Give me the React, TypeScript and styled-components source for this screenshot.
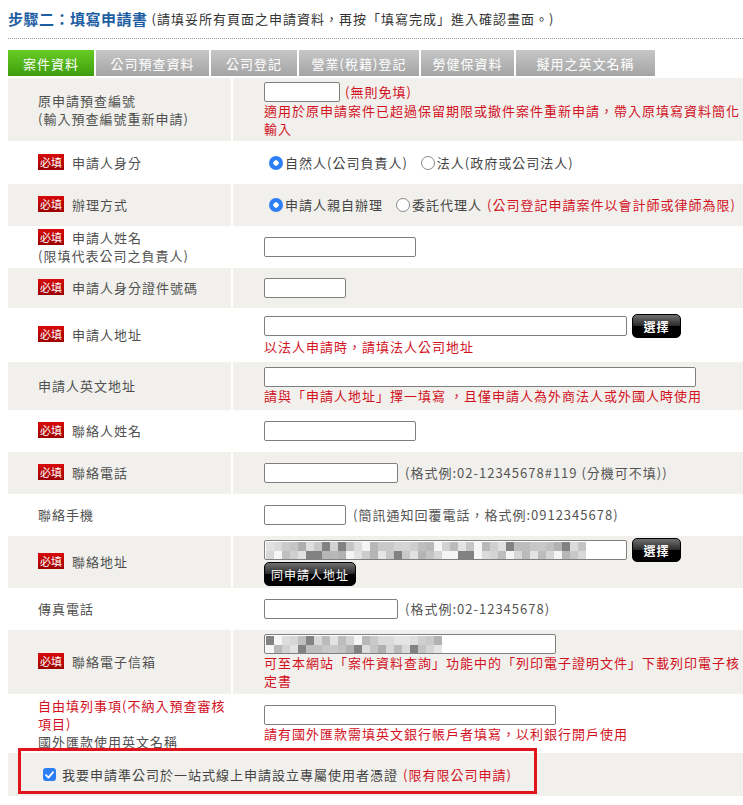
import styled, { createGlobalStyle } from "styled-components";

const GlobalStyle = createGlobalStyle`
  html, body {
    overflow: hidden;
  }
  body {
    margin: 8px 0 0 8px;
    background: #fff;
    font-family: "Noto Sans CJK TC", "Noto Sans", sans-serif;
    font-size: 13px;
    color: #333;
  }
`;

const Page = styled.div`
  width: 100%;
`;

const Heading = styled.div`
  height: 20px;
  display: flex;
  align-items: center;
  padding-bottom: 10px;
  border-bottom: 1px dotted #9a9a9a;
  white-space: nowrap;
`;

const StepTitle = styled.span`
  color: #1d5ea3;
  font-size: 15px;
  font-weight: bold;
  letter-spacing: 0.5px;
`;

const StepNote = styled.span`
  margin-left: 4px;
  font-size: 13px;
  letter-spacing: 1px;
  color: #333;
`;

const TabBar = styled.div`
  display: flex;
  gap: 2px;
  margin-top: 11px;
`;

const Tab = styled.div<{ $active?: boolean; $w: number }>`
  width: ${(p) => p.$w}px;
  height: 26px;
  display: flex;
  align-items: center;
  justify-content: center;
  color: #fff;
  font-size: 13px;
  letter-spacing: 1px;
  background: ${(p) =>
    p.$active
      ? "linear-gradient(#68cc24, #3d9d0d)"
      : "linear-gradient(#c6c6c6, #a4a4a4)"};
`;

const Table = styled.div`
  margin-top: 2px;
`;

const Row = styled.div<{ $alt?: boolean; $h: number }>`
  display: grid;
  grid-template-columns: 223px 1fr;
  column-gap: 2px;
  height: ${(p) => p.$h}px;
  & > * {
    background: ${(p) => (p.$alt ? "#f1f0ec" : "#fff")};
  }
`;

const LabelCell = styled.div`
  display: flex;
  flex-direction: column;
  justify-content: center;
  padding-left: 30px;
  color: #505050;
  line-height: 18px;
  letter-spacing: 1px;
`;

const LabelLine = styled.div<{ $red?: boolean }>`
  color: ${(p) => (p.$red ? "#d2101e" : "inherit")};
`;

const Required = styled.span`
  display: inline-block;
  margin-right: 8px;
  padding: 0 2px;
  background: linear-gradient(#d80a0a, #9c0000);
  color: #fff;
  font-size: 11px;
  line-height: 16px;
  letter-spacing: 0;
  vertical-align: 1px;
`;

const FieldCell = styled.div`
  display: flex;
  flex-direction: column;
  justify-content: center;
  padding-left: 31px;
  line-height: 18px;
  letter-spacing: 1px;
`;

const FieldLine = styled.div`
  display: flex;
  align-items: center;
  white-space: nowrap;
`;

const TextInput = styled.input<{ $w: number }>`
  box-sizing: border-box;
  width: ${(p) => p.$w}px;
  height: 20px;
  margin: 0;
  padding: 0 3px;
  border: 1px solid #7f7f7f;
  border-radius: 2px;
  background: #fff;
  font-family: inherit;
  font-size: 13px;
`;

const MaskedInput = styled.div<{ $w: number }>`
  box-sizing: border-box;
  width: ${(p) => p.$w}px;
  height: 20px;
  padding: 1px 0 0 1px;
  border: 1px solid #7f7f7f;
  border-radius: 2px;
  background: #fff;
  display: grid;
  grid-auto-flow: column;
  grid-template-rows: 9px 9px;
  grid-auto-columns: 8px;
  overflow: hidden;
`;

const Pixel = styled.span``;

const Hint = styled.div`
  color: #d2101e;
  line-height: 18px;
  letter-spacing: 1px;
`;

const RedNote = styled.span`
  margin-left: 5px;
  color: #d2101e;
`;

const GrayNote = styled.span`
  margin-left: 7px;
  color: #555;
`;

const Option = styled.label`
  display: inline-flex;
  align-items: center;
  margin-right: 8px;
  color: #444;
`;

const Radio = styled.input.attrs({ type: "radio" })`
  appearance: none;
  box-sizing: border-box;
  width: 14px;
  height: 14px;
  margin: 0 2px 0 5px;
  border: 1px solid #8a8a8a;
  border-radius: 50%;
  background: #fff;
  &:checked {
    border: none;
    background: radial-gradient(circle, #fff 0 2.4px, #2d7ff5 3px);
  }
`;

const BlackButton = styled.button<{ $w: number; $bold?: boolean }>`
  box-sizing: border-box;
  width: ${(p) => p.$w}px;
  height: 24px;
  margin: 0;
  padding: 0;
  border: 1px solid #000;
  border-radius: 5px;
  background: linear-gradient(#707070 0%, #2b2b2b 48%, #000 52%, #000 100%);
  color: #fff;
  font-family: inherit;
  font-size: 12px;
  font-weight: ${(p) => (p.$bold ? "bold" : "normal")};
  letter-spacing: 1px;
`;

const PickButton = styled(BlackButton)`
  margin-left: 5px;
`;

const ConsentRow = styled.div`
  position: relative;
  height: 43px;
  display: flex;
  align-items: center;
  padding-left: 35px;
  background: #f1f0ec;
  letter-spacing: 1px;
  color: #444;
`;

const CheckBox = styled.span`
  display: inline-flex;
  align-items: center;
  justify-content: center;
  width: 13px;
  height: 13px;
  margin-right: 6px;
  border-radius: 3px;
  background: #2d7ff5;
`;

const RedFrame = styled.div`
  position: absolute;
  left: 10px;
  top: -5px;
  width: 519px;
  height: 46px;
  box-sizing: border-box;
  border: 3px solid #e3131b;
  pointer-events: none;
`;

const TABS = [
  { label: "案件資料", w: 86 },
  { label: "公司預查資料", w: 113 },
  { label: "公司登記", w: 86 },
  { label: "營業(稅籍)登記", w: 120 },
  { label: "勞健保資料", w: 93 },
  { label: "擬用之英文名稱", w: 139 },
];

function Mosaic({ cols, seed }: { cols: number; seed: number }) {
  const cells = [];
  for (let i = 0; i < cols * 2; i++) {
    const n = (i * 73 + seed * 31 + ((i * i) % 17) * 11) % 100;
    const shade = n < 12 ? 245 : n < 20 ? 130 : 160 + Math.round((n / 100) * 70);
    cells.push(
      <Pixel
        key={i}
        style={{ background: `rgb(${shade},${shade},${shade})` }}
      />
    );
  }
  return <>{cells}</>;
}

function Label({
  required,
  lines,
}: {
  required?: boolean;
  lines: string[];
}) {
  return (
    <LabelCell>
      {lines.map((t, i) => (
        <LabelLine key={i}>
          {required && i === 0 && <Required>必填</Required>}
          {t}
        </LabelLine>
      ))}
    </LabelCell>
  );
}

function App() {
  return (
    <Page>
      <GlobalStyle />
      <Heading>
        <StepTitle>步驟二：填寫申請書</StepTitle>
        <StepNote>(請填妥所有頁面之申請資料，再按「填寫完成」進入確認畫面。)</StepNote>
      </Heading>
      <TabBar>
        {TABS.map((t, i) => (
          <Tab key={t.label} $w={t.w} $active={i === 0}>
            {t.label}
          </Tab>
        ))}
      </TabBar>
      <Table>
        <Row $alt $h={63}>
          <Label lines={["原申請預查編號", "(輸入預查編號重新申請)"]} />
          <FieldCell>
            <FieldLine>
              <TextInput $w={76} />
              <RedNote>(無則免填)</RedNote>
            </FieldLine>
            <Hint>
              適用於原申請案件已超過保留期限或撤件案件重新申請，帶入原填寫資料簡化輸入
            </Hint>
          </FieldCell>
        </Row>
        <Row $h={43}>
          <Label required lines={["申請人身分"]} />
          <FieldCell>
            <FieldLine>
              <Option>
                <Radio name="identity" defaultChecked />
                自然人(公司負責人)
              </Option>
              <Option>
                <Radio name="identity" />
                法人(政府或公司法人)
              </Option>
            </FieldLine>
          </FieldCell>
        </Row>
        <Row $alt $h={42}>
          <Label required lines={["辦理方式"]} />
          <FieldCell>
            <FieldLine>
              <Option>
                <Radio name="method" defaultChecked />
                申請人親自辦理
              </Option>
              <Option>
                <Radio name="method" />
                委託代理人
                <RedNote>(公司登記申請案件以會計師或律師為限)</RedNote>
              </Option>
            </FieldLine>
          </FieldCell>
        </Row>
        <Row $h={42}>
          <Label required lines={["申請人姓名", "(限填代表公司之負責人)"]} />
          <FieldCell>
            <TextInput $w={152} />
          </FieldCell>
        </Row>
        <Row $alt $h={40}>
          <Label required lines={["申請人身分證件號碼"]} />
          <FieldCell>
            <TextInput $w={82} />
          </FieldCell>
        </Row>
        <Row $h={54}>
          <Label required lines={["申請人地址"]} />
          <FieldCell>
            <FieldLine>
              <TextInput $w={363} />
              <PickButton $w={49} $bold>
                選擇
              </PickButton>
            </FieldLine>
            <Hint>以法人申請時，請填法人公司地址</Hint>
          </FieldCell>
        </Row>
        <Row $alt $h={48}>
          <Label lines={["申請人英文地址"]} />
          <FieldCell>
            <TextInput $w={432} />
            <Hint>請與「申請人地址」擇一填寫 ，且僅申請人為外商法人或外國人時使用</Hint>
          </FieldCell>
        </Row>
        <Row $h={42}>
          <Label required lines={["聯絡人姓名"]} />
          <FieldCell>
            <TextInput $w={152} />
          </FieldCell>
        </Row>
        <Row $alt $h={42}>
          <Label required lines={["聯絡電話"]} />
          <FieldCell>
            <FieldLine>
              <TextInput $w={134} />
              <GrayNote>(格式例:02-12345678#119 (分機可不填))</GrayNote>
            </FieldLine>
          </FieldCell>
        </Row>
        <Row $h={42}>
          <Label lines={["聯絡手機"]} />
          <FieldCell>
            <FieldLine>
              <TextInput $w={82} />
              <GrayNote>(簡訊通知回覆電話，格式例:0912345678)</GrayNote>
            </FieldLine>
          </FieldCell>
        </Row>
        <Row $alt $h={52}>
          <Label required lines={["聯絡地址"]} />
          <FieldCell>
            <FieldLine>
              <MaskedInput $w={363}>
                <Mosaic cols={40} seed={3} />
              </MaskedInput>
              <PickButton $w={49} $bold>
                選擇
              </PickButton>
            </FieldLine>
            <FieldLine>
              <BlackButton $w={92}>同申請人地址</BlackButton>
            </FieldLine>
          </FieldCell>
        </Row>
        <Row $h={42}>
          <Label lines={["傳真電話"]} />
          <FieldCell>
            <FieldLine>
              <TextInput $w={134} />
              <GrayNote>(格式例:02-12345678)</GrayNote>
            </FieldLine>
          </FieldCell>
        </Row>
        <Row $alt $h={64}>
          <Label required lines={["聯絡電子信箱"]} />
          <FieldCell>
            <MaskedInput $w={292}>
              <Mosaic cols={22} seed={7} />
            </MaskedInput>
            <Hint>
              可至本網站「案件資料查詢」功能中的「列印電子證明文件」下載列印電子核定書
            </Hint>
          </FieldCell>
        </Row>
        <Row $h={59}>
          <LabelCell>
            <LabelLine $red>自由填列事項(不納入預查審核項目)</LabelLine>
            <LabelLine>國外匯款使用英文名稱</LabelLine>
          </LabelCell>
          <FieldCell>
            <TextInput $w={292} />
            <Hint>請有國外匯款需填英文銀行帳戶者填寫，以利銀行開戶使用</Hint>
          </FieldCell>
        </Row>
        <ConsentRow>
          <CheckBox>
            <svg width="9" height="8" viewBox="0 0 9 8">
              <path
                d="M1 4.2 L3.5 6.6 L8 1.2"
                fill="none"
                stroke="#fff"
                strokeWidth="1.8"
                strokeLinecap="round"
                strokeLinejoin="round"
              />
            </svg>
          </CheckBox>
          我要申請準公司於一站式線上申請設立專屬使用者憑證
          <RedNote>(限有限公司申請)</RedNote>
          <RedFrame />
        </ConsentRow>
      </Table>
    </Page>
  );
}

export default App;
